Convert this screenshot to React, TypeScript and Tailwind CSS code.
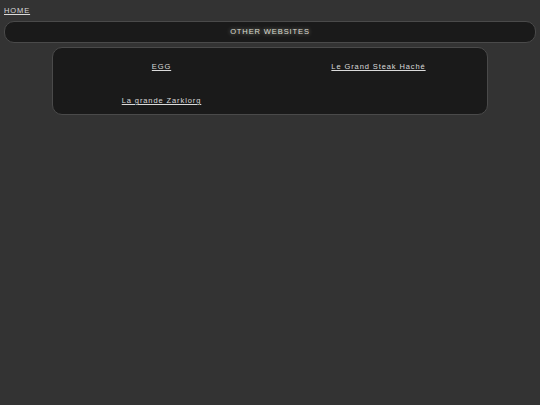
import React from 'react';

const links = ['EGG', 'Le Grand Steak Haché', 'La grande Zarklorg'];

export default function App() {
  return (
    <div className="min-h-screen w-full bg-[#333333] text-[#dadada] font-['Liberation_Sans',Arial,sans-serif] text-[7.5px] tracking-[0.9px]">
      <div className="px-[4px] pt-[6px] pb-[5px] leading-[10px]">
        <a href="#" className="underline">HOME</a>
      </div>
      <div className="mx-[4px] h-[22px] rounded-[10px] border border-[#4a4a4a] bg-[#1a1a1a] flex items-center justify-center">
        <span className="text-[#dcdcd0] [text-shadow:0_0_4px_rgba(255,255,230,0.6)]">OTHER WEBSITES</span>
      </div>
      <div className="mx-auto mt-[4px] w-[436px] h-[68px] rounded-[10px] border border-[#4a4a4a] bg-[#1a1a1a] grid grid-cols-2 content-start pt-[14px]">
        {links.map((l) => (
          <div key={l} className="h-[34px] flex justify-center leading-[10px]">
            <a href="#" className="underline">{l}</a>
          </div>
        ))}
      </div>
    </div>
  );
}
